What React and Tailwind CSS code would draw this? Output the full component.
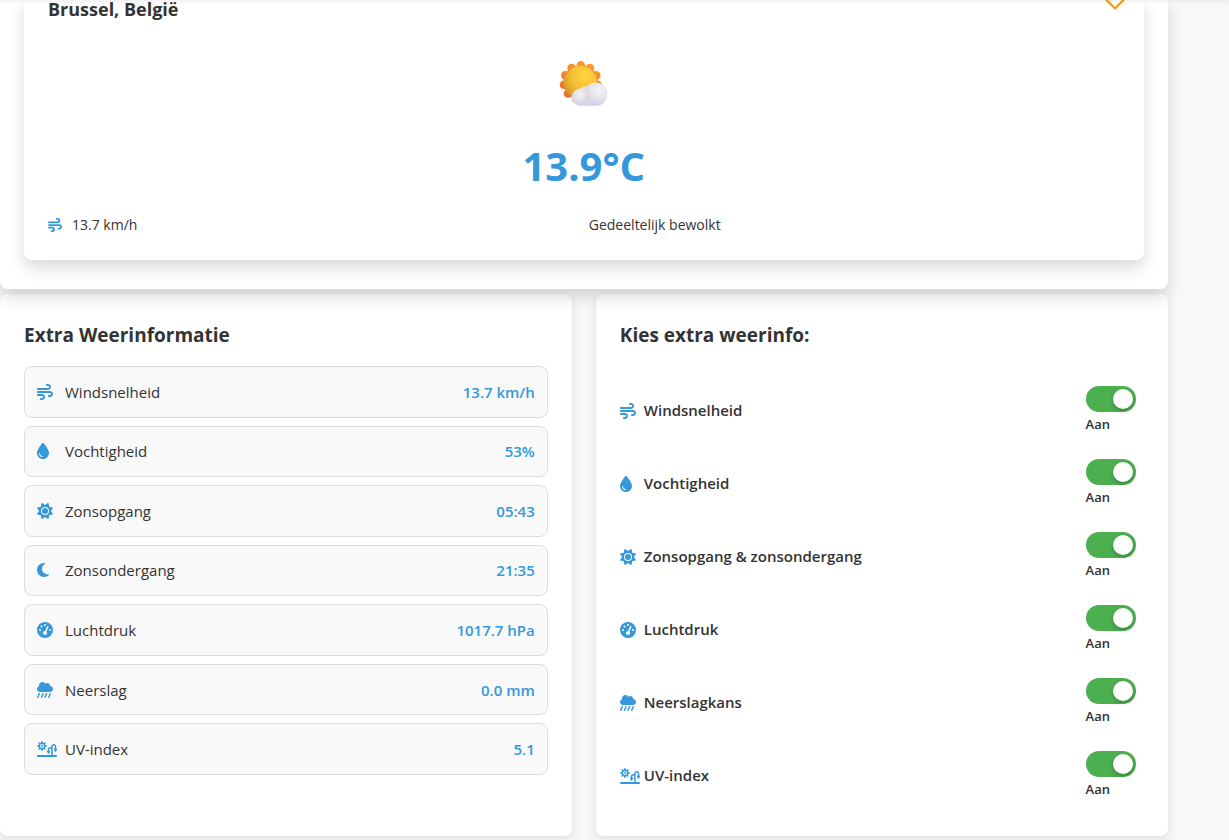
import { useState } from 'react';
import {
  FaWind,
  FaDroplet,
  FaSun,
  FaMoon,
  FaGaugeHigh,
  FaCloudShowersHeavy,
  FaSunPlantWilt,
} from 'react-icons/fa6';

const readings = [
  { icon: FaWind, size: 'h-4 w-4', label: 'Windsnelheid', value: '13.7 km/h' },
  { icon: FaDroplet, size: 'h-4 w-3', label: 'Vochtigheid', value: '53%' },
  { icon: FaSun, size: 'h-4 w-4', label: 'Zonsopgang', value: '05:43' },
  { icon: FaMoon, size: 'h-4 w-3', label: 'Zonsondergang', value: '21:35' },
  { icon: FaGaugeHigh, size: 'h-4 w-4', label: 'Luchtdruk', value: '1017.7 hPa' },
  { icon: FaCloudShowersHeavy, size: 'h-4 w-4', label: 'Neerslag', value: '0.0 mm' },
  { icon: FaSunPlantWilt, size: 'h-4 w-5', label: 'UV-index', value: '5.1' },
];

const options = [
  { id: 'wind', icon: FaWind, size: 'h-4 w-4', label: 'Windsnelheid' },
  { id: 'humidity', icon: FaDroplet, size: 'h-4 w-3', label: 'Vochtigheid' },
  { id: 'sun', icon: FaSun, size: 'h-4 w-4', label: 'Zonsopgang & zonsondergang' },
  { id: 'pressure', icon: FaGaugeHigh, size: 'h-4 w-4', label: 'Luchtdruk' },
  { id: 'rain', icon: FaCloudShowersHeavy, size: 'h-4 w-4', label: 'Neerslagkans' },
  { id: 'uv', icon: FaSunPlantWilt, size: 'h-4 w-5', label: 'UV-index' },
];

function PartlySunny() {
  const petals = Array.from({ length: 11 }, (_, i) => {
    const a = ((i * 360) / 11 - 90) * (Math.PI / 180);
    return [20.8 + 17 * Math.cos(a), 23.4 + 17 * Math.sin(a)];
  });
  return (
    <svg viewBox="0 -1 48 48" className="h-12 w-12 overflow-visible" role="img" aria-label="Gedeeltelijk bewolkt">
      <defs>
        <linearGradient id="rays" x1="0.8" y1="0" x2="0.1" y2="1">
          <stop offset="0" stopColor="#ff9a2e" />
          <stop offset="0.5" stopColor="#fa8428" />
          <stop offset="1" stopColor="#e2643a" />
        </linearGradient>
        <radialGradient id="disc" cx="0.66" cy="0.28" r="0.8">
          <stop offset="0" stopColor="#ffd23f" />
          <stop offset="0.5" stopColor="#f8c136" />
          <stop offset="1" stopColor="#cf9624" />
        </radialGradient>
        <radialGradient id="puffLeft" cx="0.5" cy="0.35" r="0.65">
          <stop offset="0" stopColor="#f3f2f5" />
          <stop offset="0.6" stopColor="#e0dfe6" />
          <stop offset="1" stopColor="#cfcbe2" />
        </radialGradient>
        <radialGradient id="puffRight" cx="0.65" cy="0.35" r="0.7">
          <stop offset="0" stopColor="#f6f5f7" />
          <stop offset="0.6" stopColor="#e4e2e8" />
          <stop offset="1" stopColor="#cfcce0" />
        </radialGradient>
        <linearGradient id="puffBase" x1="0" y1="0" x2="0" y2="1">
          <stop offset="0" stopColor="#dddce3" stopOpacity="0" />
          <stop offset="0.6" stopColor="#dcd8ec" stopOpacity="0.6" />
          <stop offset="1" stopColor="#d3c8fa" />
        </linearGradient>
      </defs>
      <path
        fill="url(#rays)"
        d={petals
          .map(([x, y]) => `M${x - 4.3} ${y}a4.3 4.3 0 1 1 8.6 0a4.3 4.3 0 1 1 -8.6 0z`)
          .concat('M3.3 23.4a17.5 17.5 0 1 1 35 0a17.5 17.5 0 1 1 -35 0z')
          .join('')}
      />
      <circle cx="20.4" cy="23.4" r="16.6" fill="url(#disc)" />
      <circle cx="25.3" cy="33" r="5.8" fill="#e2e1e8" />
      <rect x="18" y="34" width="22" height="12.5" rx="6" fill="#dcdbe3" />
      <circle cx="35.8" cy="34.9" r="11.5" fill="url(#puffRight)" />
      <circle cx="20.2" cy="38" r="8.500" fill="url(#puffLeft)" />
      <path d="M11.700 38h35.200c-.8 5-5 8.600-10 8.600H20.200c-4.700 0-8.500-3.800-8.500-8.600z" fill="url(#puffBase)" />
    </svg>
  );
}

function FavoriteButton() {
  return (
    <button type="button" aria-label="Favoriet" className="-mt-3.5 -mr-2 h-6 text-[#f39c12]">
      <svg
        viewBox="0 0 26 24"
        className="h-6 w-[26px]"
        fill="none"
        stroke="currentColor"
        strokeWidth="2.2"
        strokeLinejoin="round"
      >
        <path d="M13 22.500L3 12.500A6.200 6.200 0 0 1 13 5a6.200 6.200 0 0 1 10 7.500z" />
      </svg>
    </button>
  );
}

function Toggle({ option }) {
  const [on, setOn] = useState(true);
  const Icon = option.icon;
  return (
    <li className="flex h-[73px] items-center justify-between pr-2">
      <label htmlFor={option.id} className="flex items-center text-[15px] font-semibold">
        <span className="w-6 text-[#3498db]">
          <Icon className={option.size} />
        </span>
        {option.label}
      </label>
      <div className="flex w-[50px] flex-col">
        <span className="relative h-[26px]">
          <input
            id={option.id}
            type="checkbox"
            role="switch"
            checked={on}
            onChange={() => setOn(!on)}
            className="peer block h-[26px] w-[50px] cursor-pointer appearance-none rounded-full bg-[#ccc] checked:bg-[#4caf50]"
          />
          <span className="pointer-events-none absolute top-[3px] left-[3px] h-5 w-5 rounded-full bg-white shadow-[0_2px_4px_rgba(0,0,0,0.25)] peer-checked:left-[27px]" />
        </span>
        <span className="text-[13px] leading-6 font-semibold">{on ? 'Aan' : 'Uit'}</span>
      </div>
    </li>
  );
}

export default function App() {
  return (
    <div className="min-h-screen overflow-hidden bg-[#f8f8f8] font-['Open_Sans','Noto_Sans',sans-serif] text-[#333]">
      <header className="relative z-20 -mt-4 h-4 bg-white shadow-[0_2px_4px_rgba(0,0,0,0.06)]" />
      <div className="w-[95%]">
        <section className="relative z-10 rounded-b-lg bg-white px-6 pb-[29px] shadow-[0_8px_16px_rgba(0,0,0,0.15)]">
          <article className="rounded-b-lg bg-white px-6 pb-6 shadow-[0_8px_16px_rgba(0,0,0,0.15)]">
            <div className="flex h-[18px] items-start justify-between">
              <h2 className="text-[18px] leading-[18px] font-bold">Brussel, België</h2>
              <FavoriteButton />
            </div>
            <div className="mt-10 flex flex-col items-center">
              <PartlySunny />
              <p className="mt-8 text-[40px] leading-[56px] font-bold text-[#3498db]">13.9°C</p>
            </div>
            <div className="mt-5 grid grid-cols-2 gap-[10px] text-[14px] leading-[22px]">
              <p className="flex items-center">
                <span className="w-6 text-[#3498db]">
                  <FaWind className="h-3.5 w-3.5" />
                </span>
                13.7 km/h
              </p>
              <p>Gedeeltelijk bewolkt</p>
            </div>
          </article>
        </section>

        <div className="mt-[5px] grid grid-cols-2 gap-6">
          <section className="rounded-lg bg-white p-6 pb-[61px] shadow-[0_4px_12px_rgba(0,0,0,0.1)]">
            <h3 className="mt-[2px] text-[19px] leading-[30px] font-bold">Extra Weerinformatie</h3>
            <ul className="mt-4 grid min-h-[409px] auto-rows-fr gap-2">
              {readings.map(({ icon: Icon, size, label, value }) => (
                <li
                  key={label}
                  className="flex items-center justify-between rounded-lg border border-[#ddd] bg-[#f9f9f9] px-3 text-[15px] leading-6"
                >
                  <span className="flex items-center">
                    <span className="w-7 text-[#3498db]">
                      <Icon className={size} />
                    </span>
                    {label}
                  </span>
                  <span className="font-semibold text-[#3498db]">{value}</span>
                </li>
              ))}
            </ul>
          </section>

          <section className="rounded-lg bg-white p-6 shadow-[0_4px_12px_rgba(0,0,0,0.1)]">
            <h3 className="mt-[2px] text-[19px] leading-[30px] font-bold">Kies extra weerinfo:</h3>
            <ul className="mt-6">
              {options.map((option) => (
                <Toggle key={option.id} option={option} />
              ))}
            </ul>
          </section>
        </div>
      </div>
    </div>
  );
}
